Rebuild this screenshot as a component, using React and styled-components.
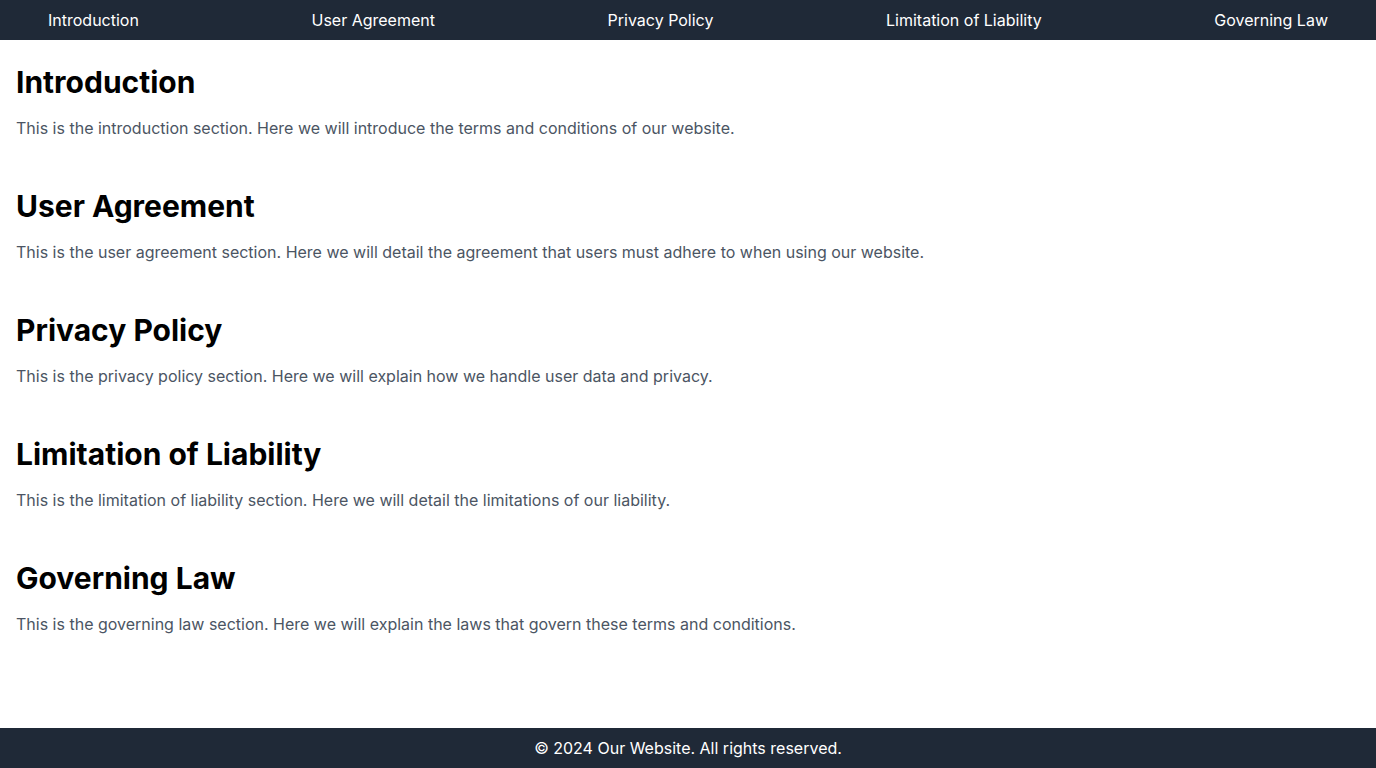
import React from "react";
import styled, { createGlobalStyle } from "styled-components";

const Global = createGlobalStyle`
  html, body { margin: 0; padding: 0; }
  body { font-family: Inter, "Noto Sans", sans-serif; background: #fff; }
  * { box-sizing: border-box; }
`;

const Page = styled.div`
  min-height: 100vh;
  display: flex;
  flex-direction: column;
`;

const Nav = styled.nav`
  background: #1f2937;
  height: 40px;
  padding: 0 48px;
  display: flex;
  align-items: center;
  justify-content: space-between;
`;

const NavLink = styled.a`
  color: #fff;
  font-size: 16px;
  line-height: 24px;
  text-decoration: none;
`;

const Main = styled.main`
  flex: 1;
  padding: 24px 16px;
  display: flex;
  flex-direction: column;
  gap: 48px;
`;

const Section = styled.section`
  display: flex;
  flex-direction: column;
  gap: 16px;
`;

const Heading = styled.h2`
  margin: 0;
  font-size: 30px;
  line-height: 36px;
  font-weight: 700;
  color: #000;
`;

const Text = styled.p`
  margin: 0;
  font-size: 16px;
  line-height: 24px;
  color: #4b5563;
`;

const Footer = styled.footer`
  background: #1f2937;
  color: #fff;
  height: 40px;
  display: flex;
  align-items: center;
  justify-content: center;
  font-size: 16px;
  line-height: 24px;
`;

const sections = [
  { id: "introduction", title: "Introduction", text: "This is the introduction section. Here we will introduce the terms and conditions of our website." },
  { id: "user-agreement", title: "User Agreement", text: "This is the user agreement section. Here we will detail the agreement that users must adhere to when using our website." },
  { id: "privacy-policy", title: "Privacy Policy", text: "This is the privacy policy section. Here we will explain how we handle user data and privacy." },
  { id: "limitation", title: "Limitation of Liability", text: "This is the limitation of liability section. Here we will detail the limitations of our liability." },
  { id: "governing-law", title: "Governing Law", text: "This is the governing law section. Here we will explain the laws that govern these terms and conditions." },
];

export default function App() {
  return (
    <Page>
      <Global />
      <Nav>
        {sections.map((s) => (
          <NavLink key={s.id} href={`#${s.id}`}>{s.title}</NavLink>
        ))}
      </Nav>
      <Main>
        {sections.map((s) => (
          <Section key={s.id} id={s.id}>
            <Heading>{s.title}</Heading>
            <Text>{s.text}</Text>
          </Section>
        ))}
      </Main>
      <Footer>© 2024 Our Website. All rights reserved.</Footer>
    </Page>
  );
}
